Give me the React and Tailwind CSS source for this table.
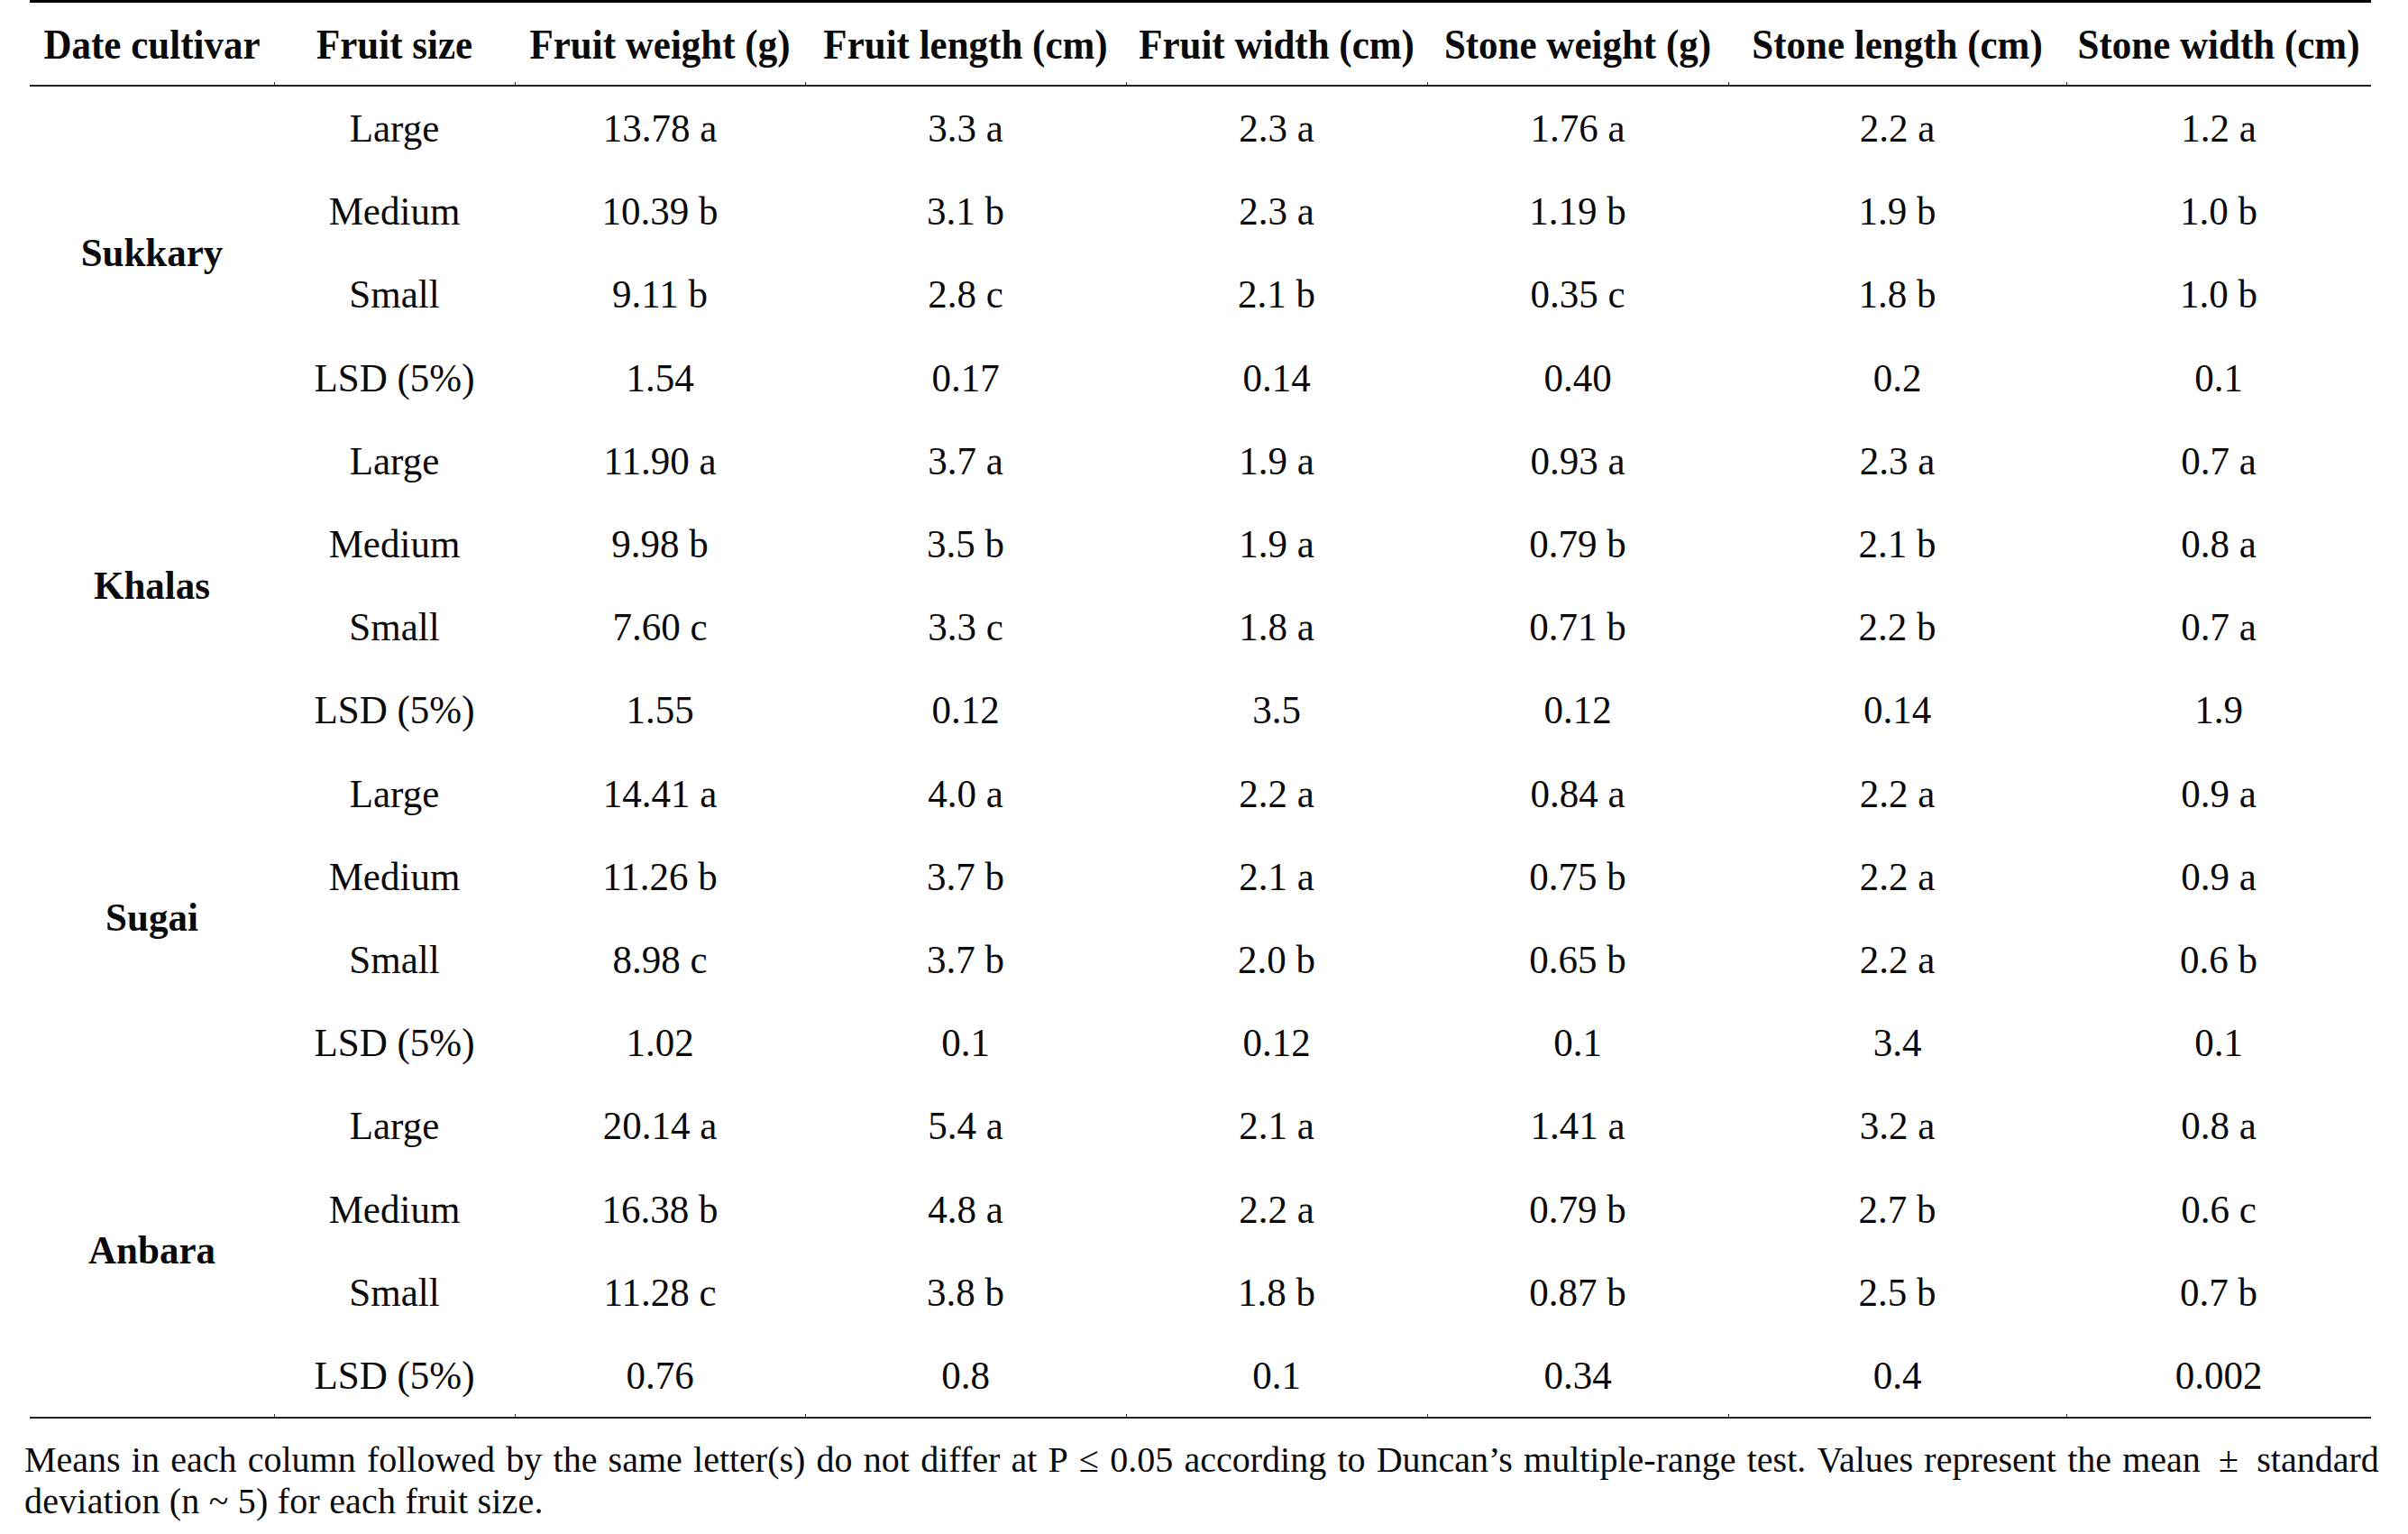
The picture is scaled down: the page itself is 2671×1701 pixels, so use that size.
import React from "react";

const headers = [
  "Date cultivar",
  "Fruit size",
  "Fruit weight (g)",
  "Fruit length (cm)",
  "Fruit width (cm)",
  "Stone weight (g)",
  "Stone length (cm)",
  "Stone width (cm)",
];

const groups = [
  {
    name: "Sukkary",
    rows: [
      ["Large", "13.78 a", "3.3 a", "2.3 a", "1.76 a", "2.2 a", "1.2 a"],
      ["Medium", "10.39 b", "3.1 b", "2.3 a", "1.19 b", "1.9 b", "1.0 b"],
      ["Small", "9.11 b", "2.8 c", "2.1 b", "0.35 c", "1.8 b", "1.0 b"],
      ["LSD (5%)", "1.54", "0.17", "0.14", "0.40", "0.2", "0.1"],
    ],
  },
  {
    name: "Khalas",
    rows: [
      ["Large", "11.90 a", "3.7 a", "1.9 a", "0.93 a", "2.3 a", "0.7 a"],
      ["Medium", "9.98 b", "3.5 b", "1.9 a", "0.79 b", "2.1 b", "0.8 a"],
      ["Small", "7.60 c", "3.3 c", "1.8 a", "0.71 b", "2.2 b", "0.7 a"],
      ["LSD (5%)", "1.55", "0.12", "3.5", "0.12", "0.14", "1.9"],
    ],
  },
  {
    name: "Sugai",
    rows: [
      ["Large", "14.41 a", "4.0 a", "2.2 a", "0.84 a", "2.2 a", "0.9 a"],
      ["Medium", "11.26 b", "3.7 b", "2.1 a", "0.75 b", "2.2 a", "0.9 a"],
      ["Small", "8.98 c", "3.7 b", "2.0 b", "0.65 b", "2.2 a", "0.6 b"],
      ["LSD (5%)", "1.02", "0.1", "0.12", "0.1", "3.4", "0.1"],
    ],
  },
  {
    name: "Anbara",
    rows: [
      ["Large", "20.14 a", "5.4 a", "2.1 a", "1.41 a", "3.2 a", "0.8 a"],
      ["Medium", "16.38 b", "4.8 a", "2.2 a", "0.79 b", "2.7 b", "0.6 c"],
      ["Small", "11.28 c", "3.8 b", "1.8 b", "0.87 b", "2.5 b", "0.7 b"],
      ["LSD (5%)", "0.76", "0.8", "0.1", "0.34", "0.4", "0.002"],
    ],
  },
];

const gridCols =
  "grid grid-cols-[271px_267px_322px_356px_334px_334px_375px_338px]";

const footWords =
  "Means in each column followed by the same letter(s) do not differ at P ≤ 0.05 according to Duncan’s multiple-range test. Values represent the mean ± standard".split(
    " "
  );

function Tick() {
  return (
    <span className="absolute left-0 bottom-0 w-[1px] h-[3px] bg-[#333]" />
  );
}

export default function App() {
  return (
    <div className="w-[2671px] h-[1701px] bg-white text-[#0a0a0a] font-['Liberation_Serif','Times_New_Roman',serif] overflow-hidden">
      <div className="ml-[33px] w-[2597px] border-t-[3px] border-black">
        {/* Header */}
        <div className={`${gridCols} h-[93px] border-b-2 border-[#222]`}>
          {headers.map((h, i) => (
            <div
              key={h}
              className="relative flex items-center justify-center text-[43px] font-bold leading-none whitespace-nowrap pt-[2px]"
            >
              {i > 0 && <Tick />}
              <span className="inline-block scale-y-[1.08]">{h}</span>
            </div>
          ))}
        </div>
        {/* Body */}
        <div
          className={`${gridCols} grid-rows-[repeat(16,92.2px)] border-b-2 border-[#222]`}
        >
          {groups.map((g, gi) => (
            <React.Fragment key={g.name}>
              <div
                className="row-span-4 flex items-center justify-center text-[43px] font-bold leading-none pb-[2px]"
                style={{ gridRowStart: gi * 4 + 1 }}
              >
                <span className="inline-block scale-y-[1.05]">{g.name}</span>
              </div>
              {g.rows.map((r, ri) =>
                r.map((c, ci) => (
                  <div
                    key={`${gi}-${ri}-${ci}`}
                    className="relative flex items-center justify-center text-[43px] leading-none whitespace-nowrap pb-[1px]"
                    style={{ gridRowStart: gi * 4 + ri + 1, gridColumnStart: ci + 2 }}
                  >
                    {gi === 3 && ri === 3 && <Tick />}
                    <span className="inline-block scale-y-[1.05]">{c}</span>
                  </div>
                ))
              )}
            </React.Fragment>
          ))}
        </div>
      </div>
      {/* Footnote */}
      <div className="ml-[27px] w-[2612px] mt-[23px] text-[40px] leading-[46px]">
        <div className="whitespace-nowrap flex justify-between">
          {footWords.map((w, i) => (
            <span key={i} className={w === "±" ? "px-[8px]" : ""}>
              {w}
            </span>
          ))}
        </div>
        <div className="tracking-[0.2px]">deviation (n ~ 5) for each fruit size.</div>
      </div>
    </div>
  );
}
